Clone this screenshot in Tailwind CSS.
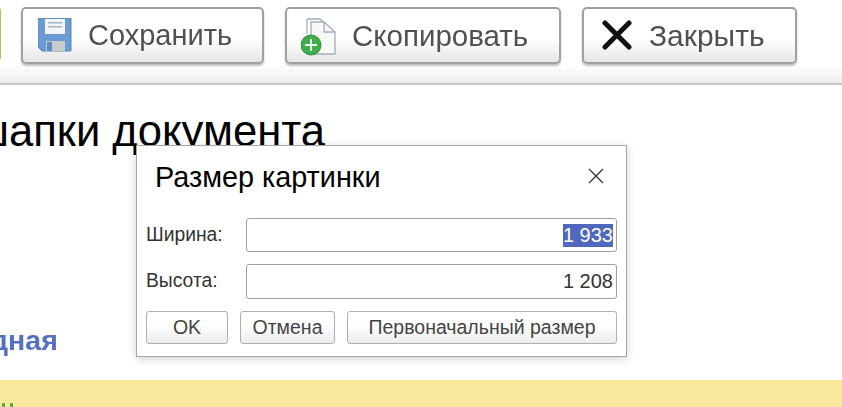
<!DOCTYPE html>
<html lang="ru">
<head>
<meta charset="utf-8">
<script src="https://cdn.jsdelivr.net/npm/@tailwindcss/browser@4"></script>
</head>
<body class="bg-white overflow-hidden">
<div class="relative w-[842px] h-[407px] overflow-hidden bg-white font-['Liberation_Sans',Arial,sans-serif]">
  <!-- Toolbar -->
  <div class="h-[85px] border-b-2 border-[#c4c4c4] bg-gradient-to-b from-white from-[78%] to-[#ececec] relative">
    <div class="absolute left-[-10px] top-[8px] w-[11px] h-[52px] bg-white border border-[#cbb957] rounded-r-[2px]"></div>
    <div class="flex pt-[7px] pl-[21px] blur-[0.4px]">
      <button class="w-[243px] h-[57px] mr-[21px] flex items-center pl-[15px] border-[2px] border-[#a0a0a0] rounded-[5px] bg-gradient-to-b from-white from-[55%] to-[#e6e6e6] shadow-[0_2px_2px_rgba(0,0,0,0.25)]">
        <svg width="34" height="34" viewBox="0 0 34 34" class="shrink-0 mb-[1px]">
          <path d="M0 0H33V33H4L0 29Z" fill="#6b9bd2"/>
          <path d="M0 0H33V33H4L0 29Z" fill="none" stroke="#5b86b8" stroke-width="1"/>
          <rect x="7" y="1" width="20" height="15" fill="#f2f4f6"/>
          <rect x="10" y="4" width="14" height="1.5" fill="#9fb6cc"/>
          <rect x="10" y="8" width="14" height="1.5" fill="#9fb6cc"/>
          <rect x="8" y="23" width="19" height="10" fill="#c9cdc9"/>
          <rect x="9" y="24" width="5" height="9" fill="#5b8dc4"/>
        </svg>
        <span class="ml-[16px] text-[29px] leading-none text-[#505050]">Сохранить</span>
      </button>
      <button class="w-[276px] h-[57px] mr-[21px] flex items-center pl-[14px] border-[2px] border-[#a0a0a0] rounded-[5px] bg-gradient-to-b from-white from-[55%] to-[#e6e6e6] shadow-[0_2px_2px_rgba(0,0,0,0.25)]">
        <svg width="36" height="38" viewBox="0 0 36 38" class="shrink-0 mt-[2px]">
          <path d="M6 1H19L24 6" fill="none" stroke="#a5adb8" stroke-width="1.3"/>
          <path d="M6 1V16" fill="none" stroke="#a5adb8" stroke-width="1.3"/>
          <path d="M10 4H23L34 14V36H10Z" fill="#f8f8f8" stroke="#a5adb8" stroke-width="1.3"/>
          <path d="M23 4V14H34" fill="none" stroke="#a5adb8" stroke-width="1.3"/>
          <circle cx="10" cy="27" r="10" fill="#3fae4a" stroke="#2d8f3a" stroke-width="1"/>
          <path d="M10 21V33M4 27H16" stroke="#e9f7ea" stroke-width="2"/>
        </svg>
        <span class="ml-[15px] text-[29.5px] leading-none text-[#505050]">Скопировать</span>
      </button>
      <button class="w-[215px] h-[57px] flex items-center pl-[18px] border-[2px] border-[#a0a0a0] rounded-[5px] bg-gradient-to-b from-white from-[55%] to-[#e6e6e6] shadow-[0_2px_2px_rgba(0,0,0,0.25)]">
        <svg width="30" height="30" viewBox="0 0 30 30" class="shrink-0 mb-[1px]">
          <path d="M3 3L27 27M27 3L3 27" stroke="#111" stroke-width="5" stroke-linecap="round"/>
        </svg>
        <span class="ml-[17px] text-[30px] leading-none text-[#505050]">Закрыть</span>
      </button>
    </div>
  </div>

  <!-- Page behind -->
  <div class="ml-[-26px] mt-[24px] text-[43.6px] leading-[44px] text-black whitespace-nowrap">шапки документа</div>
  <div class="ml-[-10px] mt-[172px] text-[28.5px] leading-[30px] font-bold text-[#5470c0] whitespace-nowrap blur-[0.4px]">дная</div>
  <div class="mt-[25px] h-[27px] bg-[#f9e99c] pt-[23px] pl-[2px] flex gap-[5px]">
    <span class="w-[3px] h-[4px] bg-[#5fae4e]"></span>
    <span class="w-[3px] h-[4px] bg-[#5fae4e]"></span>
  </div>

  <!-- Dialog -->
  <div class="absolute left-[136px] top-[145px] w-[491px] h-[212px] bg-white border border-[#a6a6a6] shadow-[0_2px_8px_rgba(0,0,0,0.18)] px-[9px]">
    <div class="flex items-center justify-between h-[60px] pl-[9px] pr-[13px] mt-[1px]">
      <span class="text-[28.8px] leading-none text-black">Размер картинки</span>
      <svg width="16" height="16" viewBox="0 0 16 16" class="mb-[3px]"><path d="M1 1L15 15M15 1L1 15" stroke="#333" stroke-width="1.3"/></svg>
    </div>
    <div class="flex flex-col gap-[12px] mt-[11px]">
      <div class="flex items-center h-[34px] w-[471px]">
        <span class="w-[100px] text-[19.3px] text-[#333]">Ширина:</span>
        <div class="w-[371px] h-[34px] border border-[#a0a0a0] rounded-[3px] flex items-center justify-end pr-[3px]">
          <span class="bg-[#4f67bd] text-white text-[20px] leading-[23px]">1 933</span>
        </div>
      </div>
      <div class="flex items-center h-[35px] w-[471px]">
        <span class="w-[100px] text-[19.3px] text-[#333]">Высота:</span>
        <div class="w-[371px] h-[35px] border border-[#a0a0a0] rounded-[3px] flex items-center justify-end pr-[3px]">
          <span class="text-[#333] text-[20px] leading-[23px]">1 208</span>
        </div>
      </div>
    </div>
    <div class="flex mt-[12px] text-[19.5px] text-[#444]">
      <button class="w-[82px] h-[33px] mr-[12px] pt-[1px] border border-[#b0b0b0] rounded-[3px] bg-gradient-to-b from-white from-[40%] to-[#ececec]">OK</button>
      <button class="w-[95px] h-[33px] mr-[12px] pt-[1px] border border-[#b0b0b0] rounded-[3px] bg-gradient-to-b from-white from-[40%] to-[#ececec]">Отмена</button>
      <button class="w-[270px] h-[33px] pt-[1px] border border-[#b0b0b0] rounded-[3px] bg-gradient-to-b from-white from-[40%] to-[#ececec]">Первоначальный размер</button>
    </div>
  </div>
</div>
</body>
</html>
